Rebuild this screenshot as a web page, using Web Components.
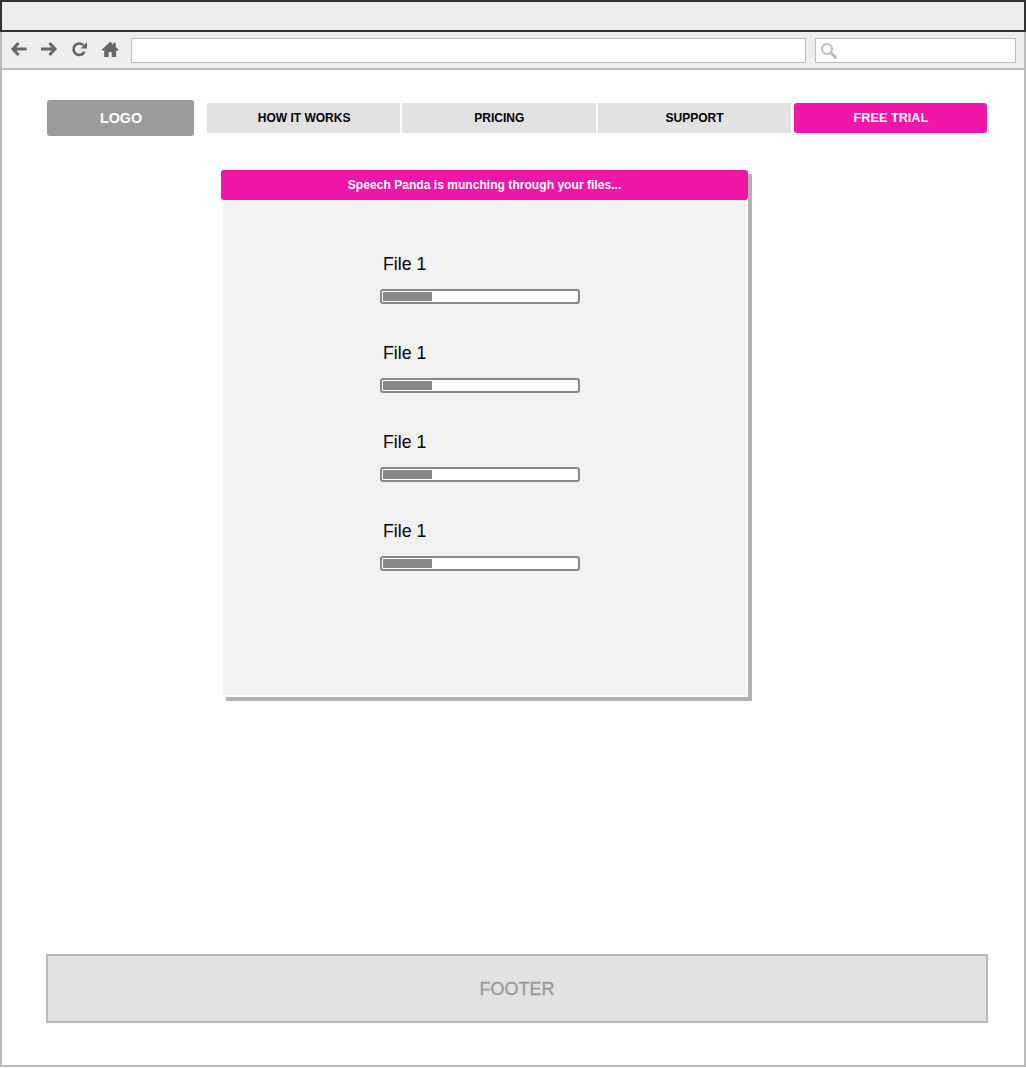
<!DOCTYPE html>
<html>
<head>
<meta charset="utf-8">
<title>Speech Panda</title>
<style>
  html, body { margin: 0; padding: 0; background: #fff; }
  body { font-family: "Liberation Sans", Arial, sans-serif; }
</style>
</head>
<body>
<browser-frame>
  <site-header></site-header>
  <upload-panel title-text="Speech Panda is munching through your files...">
    <file-progress name="File 1" value="25"></file-progress>
    <file-progress name="File 1" value="25"></file-progress>
    <file-progress name="File 1" value="25"></file-progress>
    <file-progress name="File 1" value="25"></file-progress>
  </upload-panel>
  <site-footer slot="footer">FOOTER</site-footer>
</browser-frame>

<script>
class BrowserFrame extends HTMLElement {
  connectedCallback() {
    this.attachShadow({ mode: 'open' });
    this.shadowRoot.innerHTML = `
      <style>
        :host {
          display: flex;
          flex-direction: column;
          width: 1026px;
          height: 1067px;
          box-sizing: border-box;
          border: 2px solid #bbb;
          border-top: 0;
          background: #fff;
        }
        .title {
          height: 28px;
          margin: 0 -2px;
          background: #eee;
          border: 2px solid #333;
        }
        .tools {
          display: flex;
          align-items: center;
          height: 36px;
          background: #eee;
          border-bottom: 2px solid #bbb;
          box-sizing: content-box;
          padding-left: 7px;
        }
        .tools svg { display: block; flex: none; }
        .nav { width: 20px; height: 20px; margin: 0 10px 2px 0; fill: #666; }
        .line { fill: none; stroke: #666; stroke-width: 3; }
        .url, .search {
          height: 25px;
          box-sizing: border-box;
          background: #fff;
          border: 1px solid #bbb;
        }
        .url { width: 675px; margin-left: 2px; }
        .search { width: 201px; margin-left: 9px; padding: 4px 0 0 5px; }
        main { flex: 1; display: flex; flex-direction: column; }
      </style>
      <div class="title"></div>
      <div class="tools">
        <svg class="nav" viewBox="0 0 20 20"><path class="line" d="M9.500 4L4 10l5.500 6M5 10h12.700"/></svg>
        <svg class="nav" viewBox="0 0 20 20"><path class="line" d="M10.500 4L16 10l-5.500 6M15 10H2"/></svg>
        <svg class="nav" viewBox="0 0 20 20"><path class="line" style="stroke-width:2.600" d="M15.400 12.600A5.700 5.700 0 1 1 14.300 6.200"/><path d="M18 3v6.500h-6.500z"/></svg>
        <svg class="nav" viewBox="0 0 20 20"><path d="M11.200 2.700L2.700 10.700l1.300 1.200 1.200-1v7h4.500v-5h3v5h4.500v-7l1.200 1 1.300-1.200-3-2.800V3.700h-2.300v2z"/></svg>
        <div class="url"></div>
        <div class="search">
          <svg width="17" height="17" viewBox="0 0 17 17" fill="none" stroke="#bbb"><circle cx="6" cy="6" r="5" stroke-width="2"/><path d="M9.800 9.800l5.500 5.500" stroke-width="3"/></svg>
        </div>
      </div>
      <main><slot></slot></main>
      <slot name="footer"></slot>
    `;
  }
}
customElements.define('browser-frame', BrowserFrame);

class SiteHeader extends HTMLElement {
  connectedCallback() {
    this.attachShadow({ mode: 'open' });
    this.shadowRoot.innerHTML = `
      <style>
        :host {
          display: flex;
          align-items: center;
          gap: 13px;
          margin: 30px 37px 0 45px;
          font-weight: bold;
        }
        .logo {
          width: 147px;
          height: 36px;
          line-height: 36px;
          text-align: center;
          background: #9b9b9b;
          color: #fff;
          border-radius: 3px;
          font-size: 14.300px;
          padding-left: 1px;
          box-sizing: border-box;
        }
        nav { display: flex; gap: 2px; flex: 1; }
        a {
          flex: 1;
          height: 30px;
          line-height: 30px;
          text-align: center;
          background: #e2e2e2;
          color: #000;
          font-size: 12px;
          padding-left: 1px;
        }
        a.cta { background: #f016a8; color: #fff; font-size: 12.700px; border-radius: 3px; margin-left: 1px; }
      </style>
      <div class="logo">LOGO</div>
      <nav>
        <a>HOW IT WORKS</a>
        <a>PRICING</a>
        <a>SUPPORT</a>
        <a class="cta">FREE TRIAL</a>
      </nav>
    `;
  }
}
customElements.define('site-header', SiteHeader);

class UploadPanel extends HTMLElement {
  connectedCallback() {
    this.attachShadow({ mode: 'open' });
    this.shadowRoot.innerHTML = `
      <style>
        :host {
          display: block;
          width: 526px;
          height: 527px;
          margin: 34px 0 0 220px;
          box-sizing: border-box;
          background: #f2f2f2;
          border: solid #fff;
          border-width: 0 2px 2px 1px;
          box-shadow: 4px 4px 0 #b3b3b3;
        }
        .head {
          height: 30px;
          line-height: 30px;
          margin: 0 -2px 0 -2px;
          text-align: center;
          background: #f016a8;
          color: #fff;
          border-radius: 3px;
          font-size: 12.100px;
          font-weight: bold;
        }
        .list { padding: 50px 0 0 157px; display: flex; flex-direction: column; gap: 35px; }
      </style>
      <div class="head">${this.getAttribute('title-text')}</div>
      <div class="list"><slot></slot></div>
    `;
  }
}
customElements.define('upload-panel', UploadPanel);

class FileProgress extends HTMLElement {
  connectedCallback() {
    this.attachShadow({ mode: 'open' });
    this.shadowRoot.innerHTML = `
      <style>
        :host { display: block; width: 200px; color: #000; }
        .name { height: 39px; padding-left: 3px; font-size: 17.700px; line-height: 29px; box-sizing: border-box; }
        .bar {
          height: 15px;
          box-sizing: border-box;
          padding: 1px;
          background: #fff;
          border: 2px solid #888;
          border-radius: 3px;
        }
        .fill { height: 100%; background: #888; }
      </style>
      <div class="name">${this.getAttribute('name')}</div>
      <div class="bar"><div class="fill" style="width:${this.getAttribute('value')}%"></div></div>
    `;
  }
}
customElements.define('file-progress', FileProgress);

class SiteFooter extends HTMLElement {
  connectedCallback() {
    this.attachShadow({ mode: 'open' });
    this.shadowRoot.innerHTML = `
      <style>
        :host {
          display: block;
          height: 69px;
          line-height: 66px;
          margin: 0 36px 42px 44px;
          box-sizing: border-box;
          text-align: center;
          background: #e2e2e2;
          border: 2px solid #b8b8b8;
          color: #999;
          font-size: 18px;
          -webkit-text-stroke: .3px #999;
        }
      </style>
      <slot></slot>
    `;
  }
}
customElements.define('site-footer', SiteFooter);
</script>
</body>
</html>
